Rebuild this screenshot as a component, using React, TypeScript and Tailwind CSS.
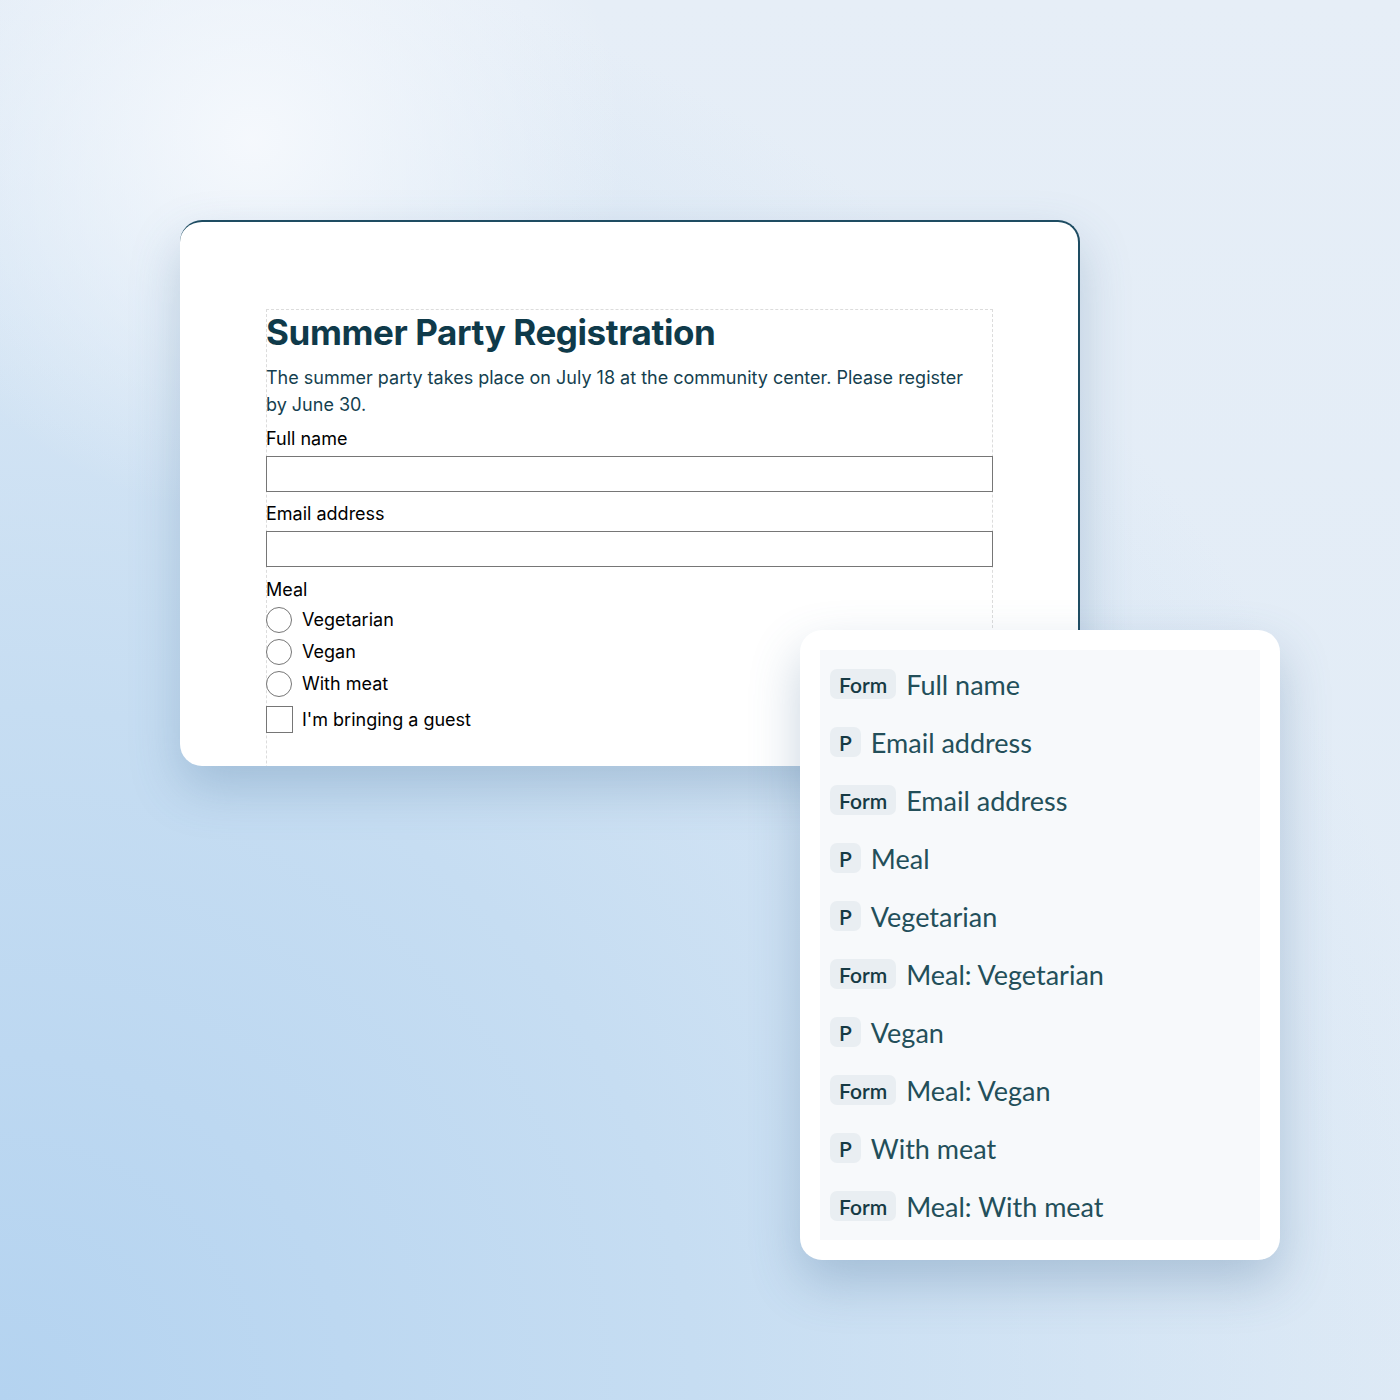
import React from "react";

const rows: { tag: string; text: string }[] = [
  { tag: "Form", text: "Full name" },
  { tag: "P", text: "Email address" },
  { tag: "Form", text: "Email address" },
  { tag: "P", text: "Meal" },
  { tag: "P", text: "Vegetarian" },
  { tag: "Form", text: "Meal: Vegetarian" },
  { tag: "P", text: "Vegan" },
  { tag: "Form", text: "Meal: Vegan" },
  { tag: "P", text: "With meat" },
  { tag: "Form", text: "Meal: With meat" },
];

export default function App() {
  return (
    <div
      className="relative w-[1400px] h-[1400px] overflow-hidden bg-[radial-gradient(circle_at_18%_10%,rgba(246,249,253,0.95)_0%,rgba(246,249,253,0)_22%),radial-gradient(ellipse_at_0%_100%,#b4d3f0_0%,#c6ddf2_35%,rgba(222,234,246,0)_75%),linear-gradient(180deg,#e6eef7_0%,#e0ebf6_100%)]"
      style={{ fontFamily: "Inter, 'Liberation Sans', sans-serif" }}
    >
      {/* Form card */}
      <div className="absolute left-[180px] top-[220px] w-[900px] h-[546px] rounded-[22px] bg-white border-t-2 border-r-2 border-[#1e4c62] overflow-hidden shadow-[0_22px_50px_rgba(70,110,150,0.28)]">
        <div className="ml-[86px] mt-[87px] w-[727px] h-[600px] border border-dashed border-[#dcdcdc] border-b-0">
          <h1 className="text-[35px] font-bold text-[#0f3a4a] leading-[40px] mt-[2px] -ml-px tracking-[-0.4px]">
            Summer Party Registration
          </h1>
          <p className="text-[18px] leading-[27px] text-[#153f4f] mt-[12px] pr-[8px] -ml-px">
            The summer party takes place on July 18 at the community center. Please register by June 30.
          </p>
          <div className="text-[18px] text-black leading-[22px] mt-[10px] -ml-px">Full name</div>
          <div className="h-[36px] border border-[#767676] mt-[6px] -ml-px -mr-px" />
          <div className="text-[18px] text-black leading-[22px] mt-[11px] -ml-px">Email address</div>
          <div className="h-[36px] border border-[#767676] mt-[6px] -ml-px -mr-px" />
          <div className="text-[18px] text-black leading-[22px] mt-[12px] -ml-px">Meal</div>
          <div className="flex flex-col gap-[6px] mt-[6px]">
            {["Vegetarian", "Vegan", "With meat"].map((m) => (
              <div key={m} className="flex items-center gap-[10px] -ml-px">
                <div className="w-[26px] h-[26px] rounded-full border border-[#767676]" />
                <span className="text-[18px] leading-[22px] text-black">{m}</span>
              </div>
            ))}
          </div>
          <div className="flex items-center gap-[9px] mt-[9px] -ml-px">
            <div className="w-[27px] h-[27px] border border-[#767676]" />
            <span className="text-[18px] leading-[22px] text-black">I'm bringing a guest</span>
          </div>
        </div>
      </div>

      {/* Tree card */}
      <div className="absolute left-[800px] top-[630px] w-[480px] h-[630px] rounded-[22px] bg-white p-[20px] shadow-[0_22px_50px_rgba(70,110,150,0.3)]">
        <div
          className="w-full h-full bg-[#f7f9fb] pl-[10px] pt-[19px] flex flex-col gap-[28px]"
          style={{ fontFamily: "Lato, 'Noto Sans', sans-serif" }}
        >
          {rows.map((r, i) => (
            <div key={i} className="flex items-center h-[30px]">
              <span className="h-[30px] px-[9px] rounded-[7px] bg-[#e9eef2] text-[#163a44] text-[21px] font-semibold flex items-center leading-none">
                {r.tag}
              </span>
              <span className="ml-[10px] text-[27px] text-[#234f5a] leading-none">{r.text}</span>
            </div>
          ))}
        </div>
      </div>
    </div>
  );
}
